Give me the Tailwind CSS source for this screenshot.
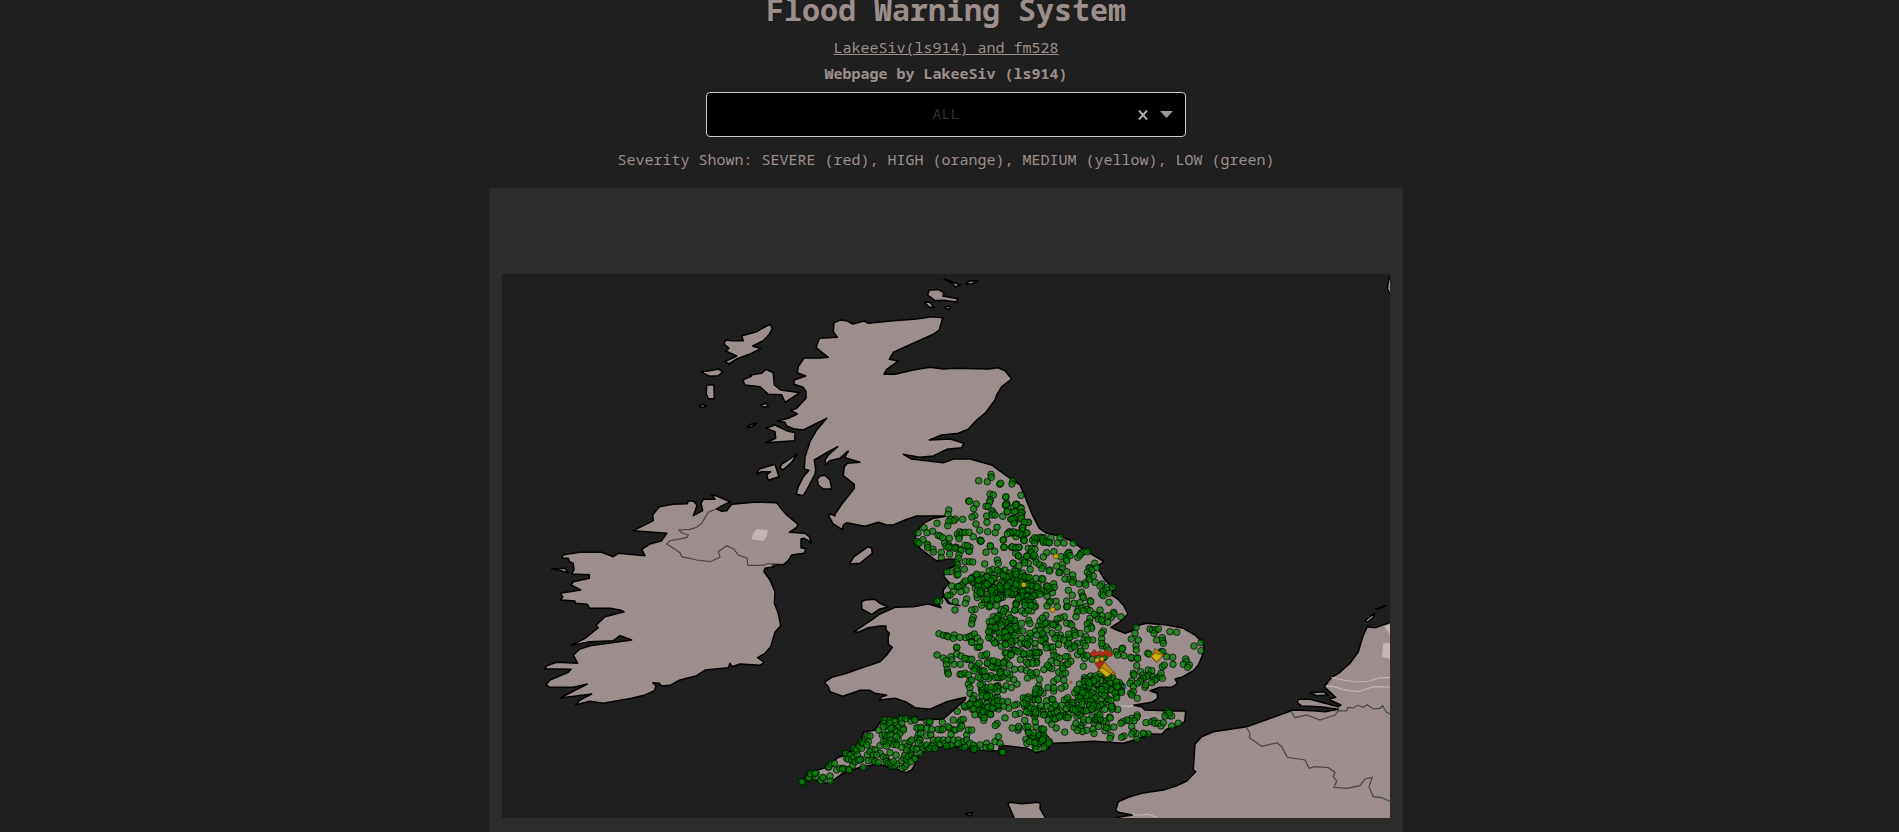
<!DOCTYPE html>
<html lang="en">
<head>
<meta charset="utf-8">
<title>Flood Warning System</title>
<script src="https://cdn.jsdelivr.net/npm/@tailwindcss/browser@4"></script>
</head>
<body class="bg-[#1f1f1f] text-[#9b8e8b] font-['Noto_Sans_Mono','Liberation_Mono',monospace] text-[15px] leading-[26px] overflow-x-hidden">
<main class="flex flex-col items-center pr-[7px] text-center">
  <h1 class="-mt-2 text-[30px] leading-9 font-bold">Flood Warning System</h1>
  <a href="#" class="mt-[6px] underline">LakeeSiv(ls914) and fm528</a>
  <p class="font-bold">Webpage by LakeeSiv (ls914)</p>
  <div class="relative mt-[6px] w-full max-w-[480px]">
    <select aria-label="Severity" class="block h-[45px] w-full appearance-none rounded-[4px] border border-[#ccc] bg-black pb-[3px] text-center [text-align-last:center] text-[#303030]"><option>ALL</option></select>
    <div class="absolute inset-y-0 right-[13px] flex items-center gap-3">
      <button type="button" aria-label="Clear"><svg class="block size-[10px]" viewBox="0 0 10 10" fill="none" stroke="#aaa" stroke-width="2"><path d="M1 .5 9 9.5M9 .5 1 9.5"/></svg></button>
      <svg class="pointer-events-none h-[7px] w-[13px]" viewBox="0 0 13 7"><path d="M0 0h13L6.5 7z" fill="#999"/></svg>
    </div>
  </div>
  <p class="mt-[9px]">Severity Shown: SEVERE (red), HIGH (orange), MEDIUM (yellow), LOW (green)</p>
  <section class="mt-4 w-full max-w-[914px] bg-[#2c2c2a] px-[13px] pt-[86px] pb-[14px]">
    <svg id="map" class="block w-full bg-[#1f1f1f]" viewBox="502 274 888 544" role="img" aria-label="Flood warning map">
      <g id="land" fill="#9b8e8c" stroke="#000" stroke-width="1.5" stroke-linejoin="round"></g>
      <g id="water" fill="#c3b5b3"></g>
      <g id="rivers" fill="none" stroke="#c3b5b3" stroke-width="1.2"></g>
      <g id="borders" fill="none" stroke="#4b4645" stroke-width="1.2"></g>
      <g id="stations" fill="#008000" fill-opacity=".7" stroke="#000" stroke-opacity=".7"></g>
      <g id="areas" stroke="#3a2500" stroke-width=".5"></g>
    </svg>
  </section>
</main>
<script>
// Map tiles: origin of each tile; coordinates inside a tile are in thirds of a map unit.
const tiles = { A:[660,270], G:[530,470], F:[780,460], C:[1000,460], E:[780,640], D:[1000,630], H:[1080,580] };
const points = src => {
  let o, out = [];
  for (const t of src.trim().split(/\s+/)) {
    if (tiles[t]) { o = tiles[t]; continue; }
    const [x, y] = t.split(',').map(Number);
    out.push([+(o[0] + x / 3).toFixed(1), +(o[1] + y / 3).toFixed(1)]);
  }
  return out;
};
const add = (id, tag, attrs) => {
  const e = document.createElementNS('http://www.w3.org/2000/svg', tag);
  for (const k in attrs) e.setAttribute(k, attrs[k]);
  document.getElementById(id).append(e);
};
const draw = (id, tag, list, extra) => list.forEach(s => add(id, tag, { points: points(s).join(' '), ...extra }));

draw('land', 'polygon', [
// Great Britain
`A 855,738 770,738 735,750 700,765 678,764 655,757 615,769 560,758 550,765 547,779 520,762 505,735 515,733 525,738 525,733 545,703 583,655 583,643 550,617 553,590 562,580 600,577 560,565 555,560 565,544 560,546 540,565 510,572 497,583 495,570 505,555 533,530 500,548 463,570 467,600 465,612 440,660 430,677 408,672 415,650 430,620 447,601 433,598 435,560 450,515 470,480 500,445 460,465 430,480 400,476 380,468 375,457 352,453 385,445 412,432 393,421 410,415 438,385 438,365 430,352 402,343 403,330 437,318 412,308 415,290 432,264 480,264 505,262 468,233 478,205 532,202 520,185 522,158 540,150 560,152 578,162 612,153 625,160 700,152 770,147 815,140 848,143 838,180 820,193 700,247 688,268 715,273 680,298 672,313 705,313 760,300 810,292 850,297 880,295 985,297 1015,293 1035,302 1055,327 1025,350 1010,375 1005,390 978,427 950,450 925,478 895,490 845,495 808,510 870,507 912,520 905,533 860,538 820,558 780,562 740,555 730,553 755,567 850,578 880,567 930,567 995,585 1040,618
C 60,75 75,110 95,160 118,205 140,220 180,228 215,243 245,265 270,280 312,305 297,315 297,330 315,360 340,385 335,405 350,415 370,435 384,462 360,485 333,502 350,510 375,520 395,513 410,497 440,490 500,495 550,505 585,525 605,545
D 612,50 610,70 595,105 580,122 545,142 525,147 533,160 515,172 480,172 450,182 472,190 473,205 455,217 400,226 425,230 435,240 520,243 557,243 554,275 530,290 500,297 485,313 450,312 410,328 370,340 280,334 200,338 150,340 145,355 110,368 80,355 0,345
E 655,333 600,330 550,322 500,318 465,322 430,335 410,350 405,372 395,390 378,398 350,388 320,380 295,372 240,382 185,402 150,428 120,430 100,412 65,430 80,405 105,392 140,382 175,352 200,345 245,305 250,277 285,270 305,240 370,235 420,240 490,237 555,180 557,172 530,178 500,185 450,208 405,203 380,187 345,175 298,180 305,170 320,166 285,160 270,151 240,151 215,160 188,169 150,155 145,140 133,127 155,112 200,100 250,82 300,65 320,45 337,22 325,12
F 325,530 328,520 318,510 318,498 300,498 265,503 235,517 223,515 275,480 300,462 345,442 400,440 445,432 483,443 475,430 490,408 505,430 540,437 510,430 490,402 490,390 508,368 492,350 495,330 525,318 525,298 505,297 470,303 420,265 405,240 410,215 430,190 460,175 490,170`,
// Ireland
`G 310,182 370,152 368,135 388,110 430,103 472,101 475,93 490,93 501,105 497,118 490,137 518,122 513,100 520,88 555,88 545,75 560,78 601,95 575,108 560,117 575,124 590,122 605,103 680,96 740,98 755,118 770,135 804,163 800,172 778,187 825,190 838,200 844,220 835,212 822,205 813,207 813,233 828,236 822,250 785,255 775,272 760,284 727,283 733,290 705,295 702,305 720,330 735,365 733,400 745,430 752,467 735,487 722,530 705,550 683,563 703,577 690,586 630,582 607,590 600,580 595,593 525,600 500,617 450,630 420,646 395,648 387,640 368,638 378,648 373,662 345,675 305,685 220,700 180,694 137,704 150,690 185,672 90,684 172,642 130,652 60,652 48,645 60,630 115,607 123,598 45,596 50,587 80,577 143,580 130,555 150,537 180,527 305,510 270,497 250,512 180,515 123,526 165,505 205,473 198,466 225,440 282,425 270,420 240,415 180,415 172,403 135,400 135,393 93,390 98,380 90,370 152,360 123,345 130,335 178,325 178,314 125,312 132,300 130,280 118,275 115,265 95,265 100,254 150,247 215,247 250,260 265,250 345,257 335,238 360,222 395,212 410,190`,
`G 65,297 105,295 115,309 85,300`,
// Hebrides and the Clyde
`A 330,162 337,175 328,193 310,212 278,228 302,236 268,253 230,267 207,282 195,275 230,258 197,243 207,235 192,222 197,210 217,212 250,212 245,197 290,185`,
`A 123,305 150,302 175,297 188,305 175,317 150,319 132,310`,
`A 140,345 162,344 163,386 145,386 139,372`,
`A 118,408 130,403 138,408 125,413`,
`A 248,330 275,318 270,315 305,310 318,298 340,308 343,345 362,360 420,368 375,397 365,374 325,373 300,350 255,345`,
`A 302,405 320,400 325,408 312,412`,
`A 260,472 275,462 290,460 275,470`,
`A 318,475 345,465 380,482 405,488 404,512 317,518 347,505 345,485`,
`A 411,552 395,577 370,599 360,595 365,582 385,570`,
`A 290,612 298,597 345,583 357,620 325,631 320,615 332,605 305,605`,
`A 472,628 480,618 495,616 510,630 515,657 490,657 475,645`,
// Orkney
`A 803,75 808,60 835,59 852,68 848,78 893,86 890,96 850,91 825,92`,
`A 852,27 880,37 902,45 885,51 880,42`, `A 917,42 930,32 953,34 935,41`,
`A 793,97 810,97 822,112 808,112`, `A 853,112 870,108 868,120`,
// Isle of Man, Anglesey
`F 208,312 222,290 265,260 275,265 277,280 240,310`,
`F 245,425 255,420 285,418 300,430 325,441 300,447 275,463 245,447`,
// Continent
`H 935,126 885,143 862,140 848,170 835,215 810,250 780,277 755,292 733,320 767,352 745,358 783,375 775,380 735,370 690,358 655,358 652,368 665,378 720,380 775,388 735,395 700,392 640,390 580,412 500,440 400,455 365,470 345,492 340,570 347,575 320,603 290,617 250,630 185,640 145,652 115,665 107,690 115,697 157,705 107,713 107,725 940,725`,
`H 690,338 730,335 745,345 710,347`,
`H 855,122 883,100 880,113 862,127`, `H 887,87 917,77 905,83 890,88`,
// Cotentin, Channel Islands, Shetland
`H -216,672 -210,667 -175,671 -125,667 -119,672 -120,685 -103,715 -103,725 -192,725 -200,708`,
`H 932,-918 924,-890 922,-875 928,-860 936,-855 940,-915`, `H -343,702 -322,697 -329,708`
]);
draw('water', 'polygon', ['G 680,177 714,181 710,200 700,213 665,208 670,190', 'H 913,140 930,133 930,163', 'H 910,190 930,188 930,238 905,230']);
draw('rivers', 'polyline', ['H 755,292 790,300 830,306 870,303 900,293 930,293', 'H 738,318 760,320 800,331 835,335 880,320 930,321', 'H 157,700 165,705 180,705 205,703 230,712', 'D 365,227 385,230 400,226']);
draw('borders', 'polyline', [
'G 558,117 535,127 515,160 500,172 480,178 447,180 455,188 475,195 470,203 420,212 410,222 450,248 455,260 500,270 540,275 570,262 565,245 590,227 612,238 625,255 652,265 653,286 700,286 715,280 735,285',
'H 498,440 510,460 508,473 545,499 592,488 605,500 622,532 675,540 687,565 705,560 745,563 765,577 760,590 770,603 762,622 800,625 840,617 855,597 877,592 867,620 880,650 905,653 930,664',
'H 633,393 645,413 680,405 720,420 765,405 775,392 800,393 803,382 820,384 833,376 850,382 862,374 880,387 900,385 908,377 918,395 930,403']);

// Monitoring stations
const stations = points(`A 956,632 993,613 994,622 982,635 1019,643 1022,640 1058,633 1056,642 1083,676 990,672 1000,675 1038,681 991,690 989,696 926,693 928,694 949,702 941,716 978,709 984,709 1036,706 1040,702 1068,703 1070,706 1083,713 1060,712 866,720 864,733 944,737 936,741 996,722 1000,728 980,738 996,735 1005,735 1028,739 1042,725 1067,724 1087,728 1062,745 1052,747 1080,747 1105,757 886,747 872,748 881,752 908,748 866,755 863,767 831,760 948,762 981,757 1063,757 1095,757 1088,772 792,773 801,788 818,784 774,788 959,781 1011,772 1006,788 983,785 1048,785 1059,790 1075,790 1087,773 1098,790 834,796 840,798 848,803 868,805 899,785 892,793 898,799 907,788 916,787 897,806 940,800 962,811 962,814 927,787 789,809 803,826 771,815 773,820 1030,810 1068,800 1091,810 1127,810 1140,803 1150,817 1166,818 1152,803 1173,803 865,823 870,831 887,832 915,826 930,832 991,828 1032,832 1077,832
F 411,245 417,250 442,253 443,263 459,268 460,276 484,277 484,293 494,250 498,258 505,262 527,262 540,268 543,271 566,273 568,274 563,257 509,282 525,265 537,285 535,295 600,241 603,243 631,258 618,277 644,274 556,305 568,305 578,306 530,308 533,315 530,325 532,333 553,328 510,335 501,335 531,345 534,343 614,312 652,300 655,310 700,310 695,262 708,262 715,287 526,425 525,450 520,395 510,405 503,407 479,423 471,423 515,378 552,368 545,375 533,380 537,380 558,390 543,395 560,417 556,430 585,448 575,450 580,472 577,480 575,492 628,485 640,470 655,490 477,521 490,526 500,527 504,530 523,525 520,535 530,563 540,532 558,533 568,530 575,527 583,522 575,546 592,534 597,562 676,446 705,450 708,430 668,412
C 17,111 20,130 18,135 22,155 50,133 47,134 63,145 64,158 43,155 42,175 36,178 63,167 65,175 85,187 73,187 42,190 68,203 67,212 81,218 68,225 60,222 50,218 40,215 30,218 22,222 10,240 12,262 37,260 47,265 57,262 71,240 73,242 98,240 104,233 112,235 122,232 128,236 130,243 140,247 148,248 104,248 180,232 172,249 192,249 220,250 85,265 95,267 105,268 140,278 162,275 207,277 200,285 205,280 197,295 200,302 210,287 182,290 233,292 243,280 245,278 252,275 262,275 240,285 39,310 57,318 47,280 55,288 68,300 75,300 90,285 100,290 107,295 85,310 284,310 290,323 267,323 270,325 275,330 262,337 268,345 268,353 268,358 280,348 285,367 255,369 257,375 237,372 130,318 150,330 148,333 170,318 187,313 188,325 200,335 180,337 177,338 218,345 207,358 195,357 220,360 217,367 305,372 300,378 322,382 338,382 320,390 309,395 327,400 305,402 310,407 205,391 217,406 244,397 248,408 250,413 200,423 222,430 270,422 272,425 240,428 327,427 168,424 150,423 172,440 148,428 141,438 200,440 202,440 235,448 245,445 258,440 262,448 270,452 232,455 228,470 250,452 363,470 341,457 342,462 334,472 325,467 300,450 305,467 290,467 283,463 295,478 308,485 323,487 305,480 270,475 268,487 262,492 273,500 275,505 262,508 310,513 305,520 193,470 181,474 172,477 210,490 200,490 215,495 167,490 165,495 175,503 222,512 225,518 240,520 258,530 252,540 265,540 278,540 250,550 232,550 307,558 367,565 181,525 168,527 180,535 165,535 408,502 405,520 394,537 415,540 450,507 458,510 467,510 462,520 475,507 510,515 530,517 470,540 487,533 488,542 490,550 582,558 603,548 16,445 50,430 48,435 44,450 65,453 95,453 75,460 3,412 35,480 25,485 45,490 17,487 30,500 45,507 65,490 57,512 68,513 25,505 40,520 15,510 3,527 90,530 82,535 38,547 45,540 62,550 65,535 90,545 105,550 90,520 107,512 115,497 125,495 140,488 155,492 135,490 120,510 110,525 130,530 135,540 140,510 160,495 130,545
D 603,62 408,47 409,60 367,56 348,65 372,77 353,75 395,85 412,83 413,86 410,107 393,82 443,70 447,72 483,65 480,70 488,65 500,80 518,82 519,103 487,110 493,105 557,87 560,95 550,103 568,105 563,112 400,130 402,135 422,125 428,135 445,120 455,122 447,135 440,140 430,145 460,140 470,145 480,138 483,130 487,145 465,150 455,158 435,172 437,165 422,150 420,155 395,152 390,160 412,160 400,170 392,190 400,185 412,205 395,195 502,243 500,250 508,257 515,258 495,258 508,248 438,278 455,275 462,272 465,280 475,280 483,288 490,278 515,288 535,280 412,255 410,262 395,265 402,272 388,272 395,290 380,270 368,275 445,312 432,312 430,310 411,327 408,310 400,305 395,312 372,318 365,322 333,317 330,325 315,302
E 471,45 490,54 513,50 515,60 530,42 543,48 530,22 498,62 499,74 522,73 541,73 502,88 503,97 505,102 540,103 545,103 555,100 565,105 560,58 568,58 575,58 555,55 575,78 590,78 585,85 582,92 597,70 570,122 575,120 565,133 570,143 570,160 575,7 592,22 598,20 600,5 605,47 615,47 620,42 68,428 65,425 85,415 88,413 91,401 106,412 108,398 105,400 123,423 130,415 128,412 151,423 150,408 145,382 147,380 153,372 163,370 170,390 180,385 190,385 205,388 208,390 187,387 218,376 200,355 197,340 210,345 205,358 215,360 225,365 220,350 225,335 222,325 230,330 237,318 245,325 232,345 243,358 235,360 240,360 245,305 255,300 262,288 270,288 265,305 250,310 260,315 262,345 250,382 275,328 285,330 270,335 280,345 275,360 285,365 265,362 295,368 300,317 296,270 310,240 316,240 330,240 312,250 320,257 310,260 345,243 360,237 365,237 377,236 393,243 403,238 405,240 330,250 340,262 350,255 365,250 355,262 370,265 345,270 350,275 360,280 370,270 325,272 333,265 307,285 315,285 322,290 330,285 310,305 318,305 330,300 345,305 355,298 350,290 340,313 350,315 325,310 320,318 300,340 290,345 310,350 318,355 320,362 318,365 325,370 333,378 333,370 345,378 350,372 340,365 367,385 375,380 380,372 365,362 372,355 380,358 375,345 390,340 385,350 395,345 402,355 405,357 392,365 348,345 330,338 375,310 365,322 382,320 390,305 395,300 395,330 400,325 380,330 415,265 410,263 425,265 422,262 440,265 415,285 422,280 412,295 418,300 440,287 452,285 455,268 440,245 447,248 450,245 420,300 415,310 425,318 410,328 420,340 430,325 437,320 440,315 445,328 450,325 455,318 460,312 465,325 470,305 460,300 475,300 480,312 490,300 495,310 505,300 510,315 515,315 520,300 500,318 487,247 482,270 475,268 488,268 508,264 505,260 522,270 525,270 540,265 513,283 532,214 520,240 540,247 543,240 550,238 545,258 535,300 545,320 545,310 550,305 555,322 535,310 560,285 565,270 575,270 560,300 570,310 578,325 585,320 580,315 590,325 600,315 582,328 620,310 618,323 630,325 632,320 666,336 668,337 645,305 660,310 655,290`);

// Dense urban catchments: centre, radii, number of stations
let seed = 914;
const rnd = () => (seed = (seed * 16807) % 2147483647) / 2147483647;
for (const [cx, cy, rx, ry, n] of [
  [1002,582,37,13,110],[1030,588,26,12,60],[1032,562,15,10,10],[990,594,14,14,35],[1031,604,7,7,14],
  [1003,635,15,26,55],[1038,635,15,24,20],[992,680,14,20,42],[982,705,18,11,45],[1030,668,44,22,65],
  [1100,689,23,16,90],[1060,702,38,17,75],[1038,738,13,12,38],[1085,722,42,12,42],[1010,715,28,17,40],
  [1091,646,25,14,16],[1070,652,18,22,16],[1090,708,32,4,26]
]) for (let i = 0; i < n; i++) {
  const a = rnd() * 6.2832, r = Math.sqrt(rnd());
  stations.push([(cx + rx * r * Math.cos(a)).toFixed(1), (cy + ry * r * Math.sin(a)).toFixed(1)]);
}
for (const [cx, cy] of stations) add('stations', 'circle', { cx, cy, r: 3.3 });

// Warning areas
draw('areas', 'polygon', ['D 268,75 283,58 292,68 300,61 309,69 318,56 325,67 335,60 337,77 322,82 315,74 305,81 295,74 285,80', 'D 284,100 310,92 320,105 300,122'], { fill: '#b32c12' });
draw('areas', 'polygon', ['D 294,121 314,97 340,125 346,130 340,137 333,131 320,142', 'D 450,78 462,68 464,55 492,75 470,98'], { fill: '#c48a0c' });
draw('areas', 'polygon', ['D 298,121 305,112 332,131 320,141', 'D 453,78 466,70 488,76 470,96'], { fill: '#cfae10' });
for (const [x, y] of points('C 168,289 71,374 158,449')) add('areas', 'rect', { x: x - 2.3, y: y - 2.3, width: 4.6, height: 4.6, rx: 1, fill: '#c8a800' });
for (const [cx, cy] of points('D 306,87 291,91')) add('areas', 'circle', { cx, cy, r: 2.2, fill: '#d3a60c' });
for (const [cx, cy] of points('D 212,157 340,130')) add('areas', 'circle', { cx, cy, r: 1.3, fill: '#d08010' });
</script>
</body>
</html>
